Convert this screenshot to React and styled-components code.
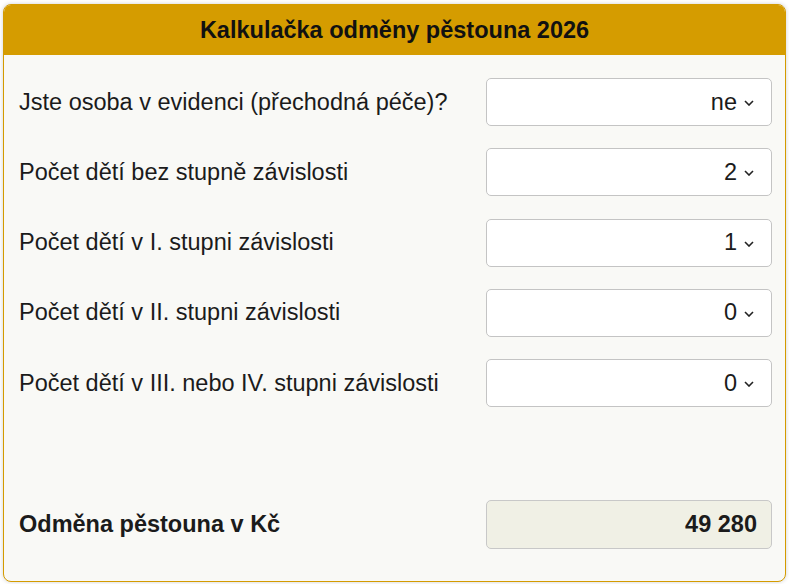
import React from "react";
import styled, { createGlobalStyle } from "styled-components";

const Global = createGlobalStyle`
  html, body { margin: 0; padding: 0; background: #ffffff; }
  body { font-family: "Liberation Sans", Arial, sans-serif; }
`;

const Page = styled.div`
  padding: 4px 3px 2px 3px;
`;

const Card = styled.div`
  box-sizing: border-box;
  width: 783px;
  height: 578px;
  border: 1px solid #d49b00;
  border-radius: 8px;
  background: #f9f9f6;
  box-shadow: 0 0 4px rgba(0, 0, 0, 0.18);
  overflow: hidden;
  display: flex;
  flex-direction: column;
`;

const Header = styled.div`
  height: 50px;
  background: #d59c00;
  display: flex;
  align-items: center;
  justify-content: center;
  font-weight: bold;
  font-size: 23.5px;
  color: #111;
`;

const Body = styled.div`
  padding: 23px 13px 0 15px;
  display: flex;
  flex-direction: column;
`;

const Rows = styled.div`
  display: flex;
  flex-direction: column;
  gap: 22.3px;
`;

const Row = styled.div`
  display: flex;
  align-items: center;
  justify-content: space-between;
`;

const Label = styled.div`
  font-size: 23.5px;
  color: #1b1b1b;
  font-weight: ${(p) => (p.$bold ? "bold" : "normal")};
`;

const Select = styled.div`
  box-sizing: border-box;
  width: 286px;
  height: 48px;
  background: #fff;
  border: 1px solid #c4c4c4;
  border-radius: 5px;
  display: flex;
  align-items: center;
  justify-content: flex-end;
  gap: 7px;
  padding-right: 17px;
  font-size: 23.5px;
  color: #1b1b1b;
`;

const Chevron = styled.svg`
  width: 10px;
  height: 6px;
  margin-top: 2px;
`;

const ResultRow = styled(Row)`
  margin-top: 92.5px;
`;

const Result = styled.div`
  box-sizing: border-box;
  width: 286px;
  height: 49px;
  background: #f0f0e5;
  border: 1px solid #c8c8c8;
  border-radius: 5px;
  display: flex;
  align-items: center;
  justify-content: flex-end;
  padding-right: 14px;
  font-size: 23.5px;
  font-weight: bold;
  color: #1b1b1b;
`;

const rows = [
  ["Jste osoba v evidenci (přechodná péče)?", "ne"],
  ["Počet dětí bez stupně závislosti", "2"],
  ["Počet dětí v I. stupni závislosti", "1"],
  ["Počet dětí v II. stupni závislosti", "0"],
  ["Počet dětí v III. nebo IV. stupni závislosti", "0"],
];

export default function App() {
  return (
    <>
      <Global />
      <Page>
        <Card>
          <Header>Kalkulačka odměny pěstouna 2026</Header>
          <Body>
            <Rows>
              {rows.map(([label, value]) => (
                <Row key={label}>
                  <Label>{label}</Label>
                  <Select>
                    <span>{value}</span>
                    <Chevron viewBox="0 0 10 6">
                      <polyline points="1,1 5,5 9,1" fill="none" stroke="#222" strokeWidth="1.6" />
                    </Chevron>
                  </Select>
                </Row>
              ))}
            </Rows>
            <ResultRow>
              <Label $bold>Odměna pěstouna v Kč</Label>
              <Result>49 280</Result>
            </ResultRow>
          </Body>
        </Card>
      </Page>
    </>
  );
}
